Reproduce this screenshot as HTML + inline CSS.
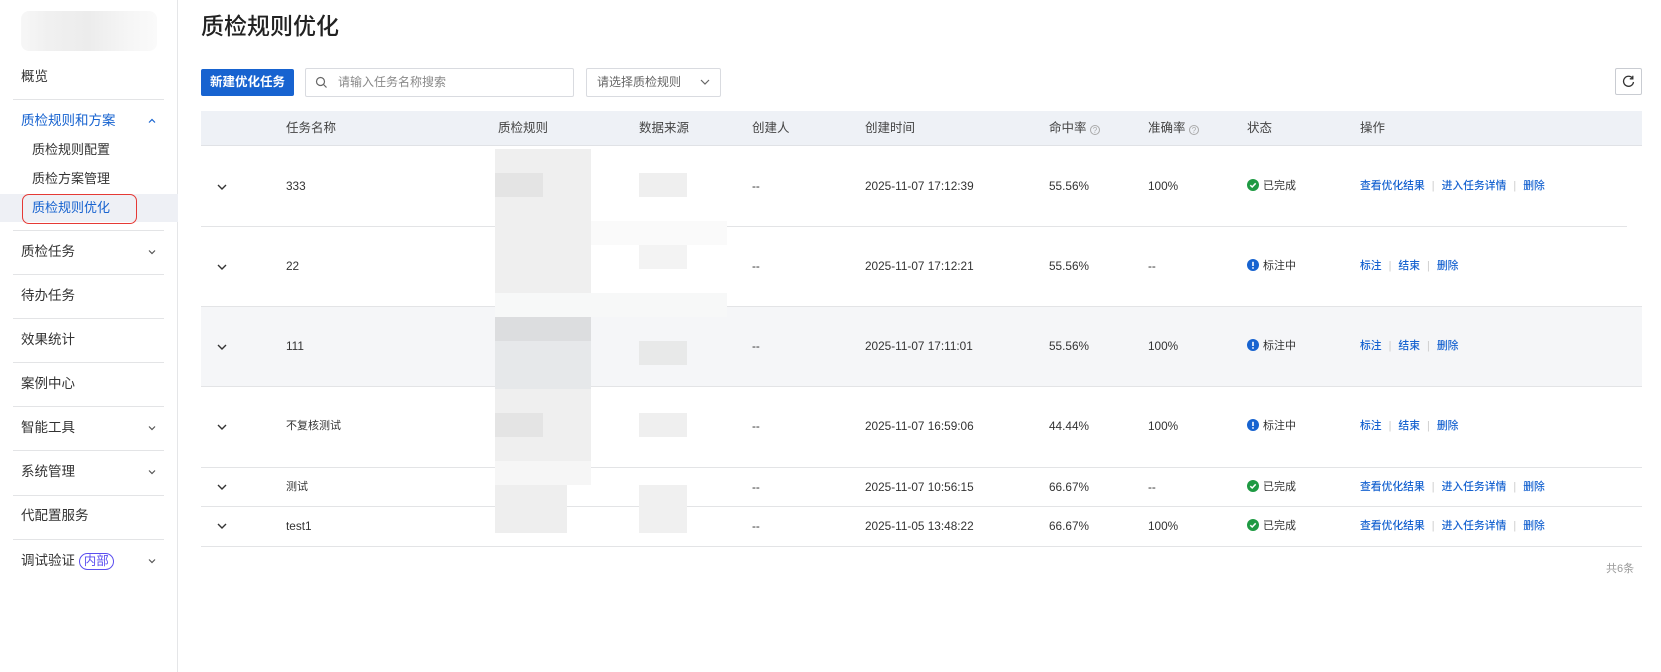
<!DOCTYPE html>
<html><head><meta charset="utf-8"><style>
*{margin:0;padding:0;box-sizing:border-box}
body{width:1661px;height:672px;overflow:hidden;background:#fff;font-family:"Liberation Sans","Noto Sans CJK SC",sans-serif;color:#333;position:relative}
.a{position:absolute}
.side{left:0;top:0;width:178px;height:672px;border-right:1px solid #e5e6e8}
.mi{position:absolute;left:21px;font-size:13.5px;color:#333;line-height:20px}
.sep{position:absolute;left:13px;width:151px;height:1px;background:#e3e4e6}
.chev{position:absolute;left:146px;width:12px;height:12px}
.th{position:absolute;top:111px;font-size:12.5px;color:#444;line-height:35px}
.td{position:absolute;font-size:11.8px;color:#333;line-height:16px}
.c{font-size:11px}
.lk{color:#1763d0;font-size:10.8px;font-weight:500}
.bar{color:#ccc;margin:0 7px}
</style></head><body>
<div class="a side">
  <div class="a" style="left:21px;top:11px;width:136px;height:40px;border-radius:8px;background:linear-gradient(90deg,#f7f7f7 0,#f0f0f0 20%,#ececec 50%,#f6f6f6 80%,#fafafa 100%)"></div>
  <div class="mi" style="top:67px">概览</div>
  <div class="sep" style="top:99px"></div>
  <div class="mi" style="top:111px;color:#1763d0">质检规则和方案</div>
  <svg class="chev" style="top:115px" viewBox="0 0 12 12"><path d="M3 7.5L6 4.5L9 7.5" fill="none" stroke="#1763d0" stroke-width="1.2"/></svg>
  <div class="mi" style="left:32px;top:140px;font-size:13px">质检规则配置</div>
  <div class="mi" style="left:32px;top:169px;font-size:13px">质检方案管理</div>
  <div class="a" style="left:0;top:194px;width:178px;height:28px;background:#eef0f5"></div>
  <div class="a" style="left:22px;top:194px;width:115px;height:30px;border:1.5px solid #e53935;border-radius:7px"></div>
  <div class="mi" style="left:32px;top:198px;font-size:13px;color:#1763d0">质检规则优化</div>
  <div class="sep" style="top:230px"></div>
  <div class="mi" style="top:242px">质检任务</div>
  <svg class="chev" style="top:246px" viewBox="0 0 12 12"><path d="M3 4.5L6 7.5L9 4.5" fill="none" stroke="#555" stroke-width="1.2"/></svg>
  <div class="sep" style="top:274px"></div>
  <div class="mi" style="top:286px">待办任务</div>
  <div class="sep" style="top:318px"></div>
  <div class="mi" style="top:330px">效果统计</div>
  <div class="sep" style="top:362px"></div>
  <div class="mi" style="top:374px">案例中心</div>
  <div class="sep" style="top:406px"></div>
  <div class="mi" style="top:418px">智能工具</div>
  <svg class="chev" style="top:422px" viewBox="0 0 12 12"><path d="M3 4.5L6 7.5L9 4.5" fill="none" stroke="#555" stroke-width="1.2"/></svg>
  <div class="sep" style="top:450px"></div>
  <div class="mi" style="top:462px">系统管理</div>
  <svg class="chev" style="top:466px" viewBox="0 0 12 12"><path d="M3 4.5L6 7.5L9 4.5" fill="none" stroke="#555" stroke-width="1.2"/></svg>
  <div class="sep" style="top:495px"></div>
  <div class="mi" style="top:506px">代配置服务</div>
  <div class="sep" style="top:539px"></div>
  <div class="mi" style="top:551px">调试验证 <span style="display:inline-block;border:1px solid #5b4ef0;color:#5b4ef0;border-radius:9px;padding:0 4px;line-height:15px;font-size:12.5px">内部</span></div>
  <svg class="chev" style="top:555px" viewBox="0 0 12 12"><path d="M3 4.5L6 7.5L9 4.5" fill="none" stroke="#555" stroke-width="1.2"/></svg>
</div>

<div class="a" style="left:201px;top:10px;font-size:23px;color:#222;line-height:32px;font-weight:500">质检规则优化</div>
<div class="a" style="left:201px;top:69px;width:93px;height:27px;background:#1763d0;border-radius:2px;color:#fff;font-size:12.5px;font-weight:bold;line-height:27px;text-align:center">新建优化任务</div>
<div class="a" style="left:305px;top:68px;width:269px;height:29px;border:1px solid #d9dbe0;border-radius:2px"></div>
<svg class="a" style="left:315px;top:76px" width="13" height="13" viewBox="0 0 13 13"><circle cx="5.5" cy="5.5" r="4" fill="none" stroke="#666" stroke-width="1.2"/><path d="M8.5 8.5L11.5 11.5" stroke="#666" stroke-width="1.2"/></svg>
<div class="a" style="left:338px;top:74px;font-size:12px;color:#888;line-height:16px">请输入任务名称搜索</div>
<div class="a" style="left:586px;top:68px;width:135px;height:29px;border:1px solid #d9dbe0;border-radius:2px"></div>
<div class="a" style="left:597px;top:74px;font-size:12px;color:#666;line-height:16px">请选择质检规则</div>
<svg class="a" style="left:699px;top:76px" width="12" height="12" viewBox="0 0 12 12"><path d="M2 4L6 8L10 4" fill="none" stroke="#666" stroke-width="1.2"/></svg>
<div class="a" style="left:1615px;top:68px;width:27px;height:27px;border:1px solid #c9ccd2;border-radius:2px"></div>
<svg class="a" style="left:1621px;top:74px" width="15" height="15" viewBox="0 0 15 15"><path d="M11.5 4.2A5 5 0 1 0 12.5 8" fill="none" stroke="#333" stroke-width="1.3"/><path d="M11.8 1.8V4.8H8.8" fill="none" stroke="#333" stroke-width="1.3"/></svg>

<div class="a" style="left:201px;top:111px;width:1441px;height:35px;background:#eef1f6;border-bottom:1px solid #e0e2e6"></div>
<div class="th" style="left:286px">任务名称</div>
<div class="th" style="left:498px">质检规则</div>
<div class="th" style="left:639px">数据来源</div>
<div class="th" style="left:752px">创建人</div>
<div class="th" style="left:865px">创建时间</div>
<div class="th" style="left:1049px">命中率 <span style="display:inline-block;width:10px;height:10px;border:1px solid #aaa;border-radius:50%;font-size:8px;line-height:9px;text-align:center;color:#aaa;vertical-align:-1px">?</span></div>
<div class="th" style="left:1148px">准确率 <span style="display:inline-block;width:10px;height:10px;border:1px solid #aaa;border-radius:50%;font-size:8px;line-height:9px;text-align:center;color:#aaa;vertical-align:-1px">?</span></div>
<div class="th" style="left:1247px">状态</div>
<div class="th" style="left:1360px">操作</div>

<div class="a" style="left:201px;top:307px;width:1441px;height:79px;background:#f5f6f8"></div>
<div class="a" style="left:201px;top:226px;width:1426px;height:1px;background:#e3e4e6"></div>
<div class="a" style="left:201px;top:306px;width:1441px;height:1px;background:#e3e4e6"></div>
<div class="a" style="left:201px;top:386px;width:1441px;height:1px;background:#e3e4e6"></div>
<div class="a" style="left:201px;top:467px;width:1441px;height:1px;background:#e3e4e6"></div>
<div class="a" style="left:201px;top:506px;width:1441px;height:1px;background:#e3e4e6"></div>
<div class="a" style="left:201px;top:546px;width:1441px;height:1px;background:#e3e4e6"></div>

<div class="a" style="left:495px;top:149px;width:96px;height:336px;background:#efefef"></div>
<div class="a" style="left:591px;top:221px;width:136px;height:24px;background:#fafafa"></div>
<div class="a" style="left:495px;top:293px;width:232px;height:24px;background:#f7f8f8"></div>
<div class="a" style="left:495px;top:317px;width:96px;height:24px;background:#dcdddf"></div>
<div class="a" style="left:495px;top:341px;width:96px;height:48px;background:#e6e8ea"></div>
<div class="a" style="left:495px;top:173px;width:48px;height:24px;background:#e4e4e4"></div>
<div class="a" style="left:495px;top:413px;width:48px;height:24px;background:#e4e4e4"></div>
<div class="a" style="left:495px;top:461px;width:72px;height:72px;background:#eeeeee"></div>
<div class="a" style="left:495px;top:461px;width:96px;height:24px;background:#f6f6f6"></div>
<div class="a" style="left:639px;top:173px;width:48px;height:24px;background:#efefef"></div>
<div class="a" style="left:639px;top:245px;width:48px;height:24px;background:#f3f3f3"></div>
<div class="a" style="left:639px;top:341px;width:48px;height:24px;background:#e8e9e9"></div>
<div class="a" style="left:639px;top:413px;width:48px;height:24px;background:#efefef"></div>
<div class="a" style="left:639px;top:485px;width:48px;height:48px;background:#f0f0f0"></div>

<svg class="a" style="left:216px;top:181px" width="12" height="12" viewBox="0 0 12 12"><path d="M2 4L6 8L10 4" fill="none" stroke="#333" stroke-width="1.4"/></svg>
<svg class="a" style="left:216px;top:261px" width="12" height="12" viewBox="0 0 12 12"><path d="M2 4L6 8L10 4" fill="none" stroke="#333" stroke-width="1.4"/></svg>
<svg class="a" style="left:216px;top:341px" width="12" height="12" viewBox="0 0 12 12"><path d="M2 4L6 8L10 4" fill="none" stroke="#333" stroke-width="1.4"/></svg>
<svg class="a" style="left:216px;top:421px" width="12" height="12" viewBox="0 0 12 12"><path d="M2 4L6 8L10 4" fill="none" stroke="#333" stroke-width="1.4"/></svg>
<svg class="a" style="left:216px;top:481px" width="12" height="12" viewBox="0 0 12 12"><path d="M2 4L6 8L10 4" fill="none" stroke="#333" stroke-width="1.4"/></svg>
<svg class="a" style="left:216px;top:520px" width="12" height="12" viewBox="0 0 12 12"><path d="M2 4L6 8L10 4" fill="none" stroke="#333" stroke-width="1.4"/></svg>

<div class="td" style="left:286px;top:178px">333</div>
<div class="td" style="left:286px;top:258px">22</div>
<div class="td" style="left:286px;top:338px">111</div>
<div class="td c" style="left:286px;top:418px">不复核测试</div>
<div class="td c" style="left:286px;top:479px">测试</div>
<div class="td" style="left:286px;top:518px">test1</div>

<div class="td" style="left:752px;top:178px">--</div>
<div class="td" style="left:752px;top:258px">--</div>
<div class="td" style="left:752px;top:338px">--</div>
<div class="td" style="left:752px;top:418px">--</div>
<div class="td" style="left:752px;top:479px">--</div>
<div class="td" style="left:752px;top:518px">--</div>

<div class="td" style="left:865px;top:178px">2025-11-07 17:12:39</div>
<div class="td" style="left:865px;top:258px">2025-11-07 17:12:21</div>
<div class="td" style="left:865px;top:338px">2025-11-07 17:11:01</div>
<div class="td" style="left:865px;top:418px">2025-11-07 16:59:06</div>
<div class="td" style="left:865px;top:479px">2025-11-07 10:56:15</div>
<div class="td" style="left:865px;top:518px">2025-11-05 13:48:22</div>

<div class="td" style="left:1049px;top:178px">55.56%</div>
<div class="td" style="left:1049px;top:258px">55.56%</div>
<div class="td" style="left:1049px;top:338px">55.56%</div>
<div class="td" style="left:1049px;top:418px">44.44%</div>
<div class="td" style="left:1049px;top:479px">66.67%</div>
<div class="td" style="left:1049px;top:518px">66.67%</div>

<div class="td" style="left:1148px;top:178px">100%</div>
<div class="td" style="left:1148px;top:258px">--</div>
<div class="td" style="left:1148px;top:338px">100%</div>
<div class="td" style="left:1148px;top:418px">100%</div>
<div class="td" style="left:1148px;top:479px">--</div>
<div class="td" style="left:1148px;top:518px">100%</div>

<div class="td c" style="left:1247px;top:178px"><svg width="12" height="12" style="vertical-align:-2px;margin-right:4px" viewBox="0 0 12 12"><circle cx="6" cy="6" r="6" fill="#1e9a43"/><path d="M3.3 6.2L5.2 8L8.7 4.3" fill="none" stroke="#fff" stroke-width="1.5"/></svg>已完成</div>
<div class="td c" style="left:1247px;top:258px"><svg width="12" height="12" style="vertical-align:-2px;margin-right:4px" viewBox="0 0 12 12"><circle cx="6" cy="6" r="6" fill="#1763d0"/><path d="M6 2.8V7" stroke="#fff" stroke-width="1.6"/><circle cx="6" cy="9" r="0.9" fill="#fff"/></svg>标注中</div>
<div class="td c" style="left:1247px;top:338px"><svg width="12" height="12" style="vertical-align:-2px;margin-right:4px" viewBox="0 0 12 12"><circle cx="6" cy="6" r="6" fill="#1763d0"/><path d="M6 2.8V7" stroke="#fff" stroke-width="1.6"/><circle cx="6" cy="9" r="0.9" fill="#fff"/></svg>标注中</div>
<div class="td c" style="left:1247px;top:418px"><svg width="12" height="12" style="vertical-align:-2px;margin-right:4px" viewBox="0 0 12 12"><circle cx="6" cy="6" r="6" fill="#1763d0"/><path d="M6 2.8V7" stroke="#fff" stroke-width="1.6"/><circle cx="6" cy="9" r="0.9" fill="#fff"/></svg>标注中</div>
<div class="td c" style="left:1247px;top:479px"><svg width="12" height="12" style="vertical-align:-2px;margin-right:4px" viewBox="0 0 12 12"><circle cx="6" cy="6" r="6" fill="#1e9a43"/><path d="M3.3 6.2L5.2 8L8.7 4.3" fill="none" stroke="#fff" stroke-width="1.5"/></svg>已完成</div>
<div class="td c" style="left:1247px;top:518px"><svg width="12" height="12" style="vertical-align:-2px;margin-right:4px" viewBox="0 0 12 12"><circle cx="6" cy="6" r="6" fill="#1e9a43"/><path d="M3.3 6.2L5.2 8L8.7 4.3" fill="none" stroke="#fff" stroke-width="1.5"/></svg>已完成</div>

<div class="td lk" style="left:1360px;top:178px">查看优化结果<span class="bar">|</span>进入任务详情<span class="bar">|</span>删除</div>
<div class="td lk" style="left:1360px;top:258px">标注<span class="bar">|</span>结束<span class="bar">|</span>删除</div>
<div class="td lk" style="left:1360px;top:338px">标注<span class="bar">|</span>结束<span class="bar">|</span>删除</div>
<div class="td lk" style="left:1360px;top:418px">标注<span class="bar">|</span>结束<span class="bar">|</span>删除</div>
<div class="td lk" style="left:1360px;top:479px">查看优化结果<span class="bar">|</span>进入任务详情<span class="bar">|</span>删除</div>
<div class="td lk" style="left:1360px;top:518px">查看优化结果<span class="bar">|</span>进入任务详情<span class="bar">|</span>删除</div>

<div class="a" style="left:1606px;top:560px;font-size:11px;color:#999">共6条</div>
</body></html>
